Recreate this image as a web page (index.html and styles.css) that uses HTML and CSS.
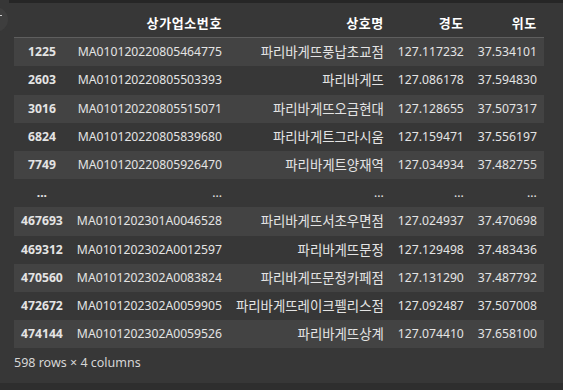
FILE: index.html
```html
<!DOCTYPE html>
<html lang="ko">
<head>
<meta charset="utf-8">
<link rel="stylesheet" href="styles.css">
</head>
<body>
<div class="topbar"></div>
<div class="collapse-btn"><span class="tick"></span></div>
<main class="output">
  <table class="df">
    <thead>
      <tr><th class="idx"></th><th>상가업소번호</th><th>상호명</th><th>경도</th><th>위도</th></tr>
    </thead>
    <tbody>
      <tr><th class="idx">1225</th><td>MA010120220805464775</td><td class="ko">파리바게뜨풍납초교점</td><td>127.117232</td><td>37.534101</td></tr>
      <tr><th class="idx">2603</th><td>MA010120220805503393</td><td class="ko">파리바게뜨</td><td>127.086178</td><td>37.594830</td></tr>
      <tr><th class="idx">3016</th><td>MA010120220805515071</td><td class="ko">파리바게뜨오금현대</td><td>127.128655</td><td>37.507317</td></tr>
      <tr><th class="idx">6824</th><td>MA010120220805839680</td><td class="ko">파리바게트그라시움</td><td>127.159471</td><td>37.556197</td></tr>
      <tr><th class="idx">7749</th><td>MA010120220805926470</td><td class="ko">파리바게트양재역</td><td>127.034934</td><td>37.482755</td></tr>
      <tr><th class="idx">...</th><td>...</td><td>...</td><td>...</td><td>...</td></tr>
      <tr><th class="idx">467693</th><td>MA0101202301A0046528</td><td class="ko">파리바게뜨서초우면점</td><td>127.024937</td><td>37.470698</td></tr>
      <tr><th class="idx">469312</th><td>MA0101202302A0012597</td><td class="ko">파리바게뜨문정</td><td>127.129498</td><td>37.483436</td></tr>
      <tr><th class="idx">470560</th><td>MA0101202302A0083824</td><td class="ko">파리바게뜨문정카페점</td><td>127.131290</td><td>37.487792</td></tr>
      <tr><th class="idx">472672</th><td>MA0101202302A0059905</td><td class="ko">파리바게뜨레이크펠리스점</td><td>127.092487</td><td>37.507008</td></tr>
      <tr><th class="idx">474144</th><td>MA0101202302A0059526</td><td class="ko">파리바게뜨상계</td><td>127.074410</td><td>37.658100</td></tr>
    </tbody>
  </table>
  <p class="shape">598 rows × 4 columns</p>
</main>
<div class="bottombar"></div>
</body>
</html>
```
FILE: styles.css
```css
html, body {
  margin: 0;
  padding: 0;
}
body {
  width: 563px;
  height: 390px;
  background: #373737;
  color: #e4e4e4;
  font-family: "Noto Sans", "Noto Sans CJK KR", sans-serif;
  font-size: 12.2px;
  display: flex;
  flex-direction: column;
  position: relative;
  overflow: hidden;
}
.topbar {
  height: 3px;
  margin-left: 9px;
  background: #262626;
  flex: none;
}
.collapse-btn {
  position: absolute;
  left: -17px;
  top: 7px;
  width: 25px;
  height: 25px;
  border-radius: 50%;
  background: #3e3e3e;
}
.collapse-btn .tick {
  position: absolute;
  left: 17px;
  top: 8px;
  width: 2px;
  height: 1px;
  background: #cfcfcf;
}
.output {
  flex: 1;
  padding: 6px 0 0 14px;
}
.df {
  border-collapse: collapse;
  border-spacing: 0;
}
.df th, .df td {
  padding: 6.1px 7px;
  line-height: 16px;
  text-align: right;
  white-space: nowrap;
}
.df thead th {
  font-size: 13px;
  font-weight: bold;
  color: #ffffff;
  letter-spacing: 0.6px;
  border-bottom: 1px solid #5e5e5e;
}
.df td.ko {
  font-size: 13.4px;
}
.df tbody th.idx {
  text-align: center;
  font-weight: bold;
}
.df tbody tr:nth-child(odd) {
  background: #434343;
}
.shape {
  margin: 7px 0 0 0;
  line-height: 16px;
  font-size: 12.5px;
  color: #d6d6d6;
}
.bottombar {
  height: 7px;
  background: #2e2e2e;
  flex: none;
}
```
